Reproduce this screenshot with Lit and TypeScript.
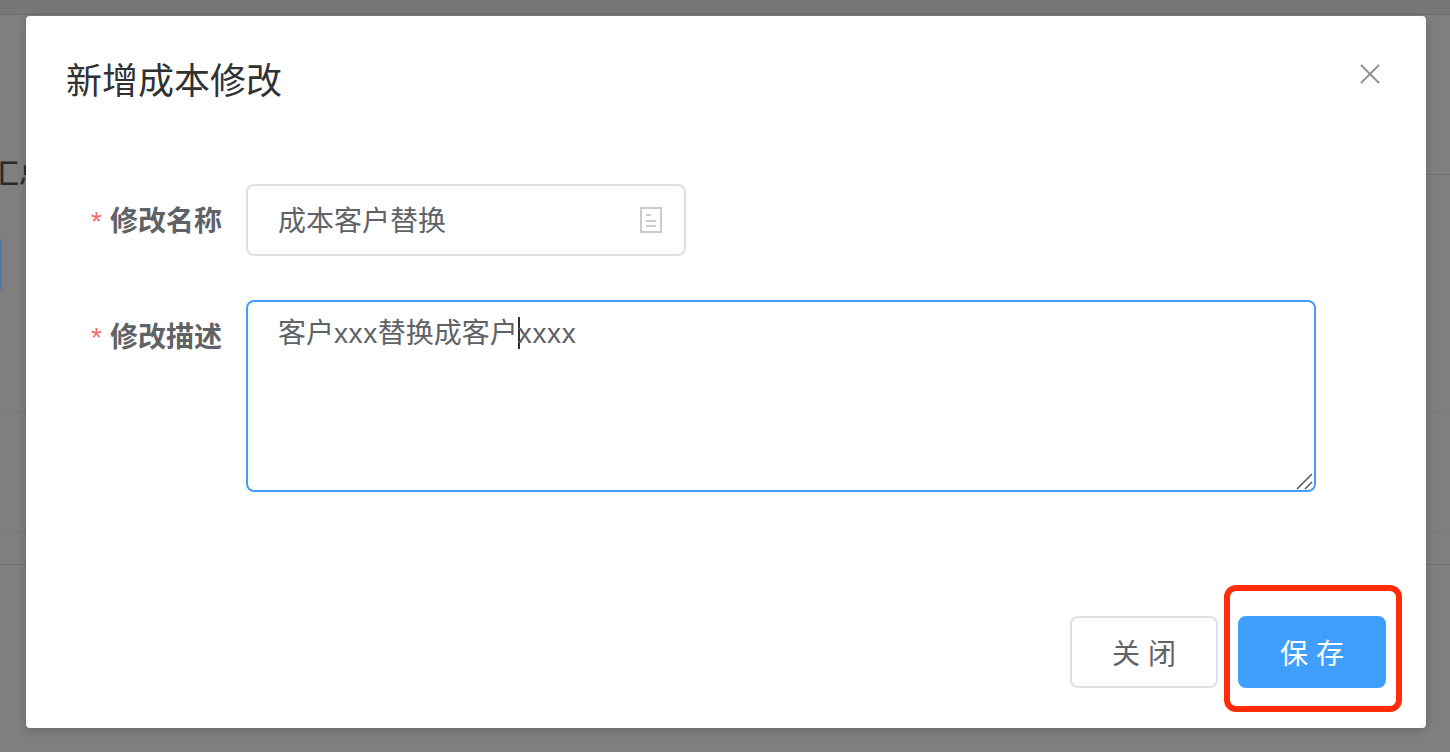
import { LitElement, html, css } from "lit";
import { customElement } from "lit/decorators.js";

@customElement("app-root")
export class AppRoot extends LitElement {
  static styles = css`
    :host {
      display: block;
      width: 1450px;
      height: 752px;
      overflow: hidden;
      font-family: "Liberation Sans", "Noto Sans CJK SC", sans-serif;
    }
    .page {
      position: relative;
      height: 752px;
      background: #7f7f7f;
      overflow: hidden;
    }
    .top-band {
      height: 14px;
      background: #77777a;
      border-bottom: 1px solid #717174;
    }
    .rule {
      position: absolute;
      left: 0;
      right: 0;
      height: 1px;
      background: #77777b;
    }
    .rule.dark {
      background: #717174;
    }
    .rule.right {
      left: 1426px;
    }
    .bg-title {
      position: absolute;
      left: -9px;
      top: 157px;
      font-size: 28px;
      font-weight: 500;
      line-height: 36px;
      color: #2a2a2a;
      white-space: nowrap;
    }
    .bg-btn {
      position: absolute;
      left: -10px;
      top: 238px;
      width: 12px;
      height: 53px;
      border-radius: 4px;
      background: #54789e;
    }
    .dialog {
      position: absolute;
      left: 26px;
      top: 16px;
      width: 1400px;
      height: 712px;
      box-sizing: border-box;
      background: #fff;
      border-radius: 4px;
      box-shadow: 0 2px 10px rgba(0, 0, 0, 0.2);
      padding: 42px 40px 40px;
      display: flex;
      flex-direction: column;
    }
    .head {
      display: flex;
      justify-content: space-between;
      align-items: flex-start;
      height: 48px;
    }
    .title {
      font-size: 36px;
      line-height: 48px;
      color: #303133;
    }
    .close {
      display: block;
      margin: 4px 4px 0 0;
    }
    .form {
      margin-top: 78px;
      display: flex;
      flex-direction: column;
      gap: 42px;
      flex: 1;
    }
    .row {
      display: flex;
      align-items: flex-start;
    }
    .label {
      width: 156px;
      flex: none;
      text-align: right;
      padding-right: 24px;
      padding-top: 2px;
      font-size: 28px;
      line-height: 72px;
      font-weight: 700;
      color: #606266;
      white-space: nowrap;
    }
    .star {
      color: #f56c6c;
      margin-right: 8px;
      font-weight: 400;
    }
    .input {
      width: 440px;
      height: 72px;
      box-sizing: border-box;
      border: 2px solid #dcdfe6;
      border-radius: 8px;
      display: flex;
      align-items: center;
      justify-content: space-between;
      padding: 0 22px 2px 30px;
      font-size: 28px;
      color: #606266;
    }
    .input svg {
      margin-top: 2px;
    }
    .textarea {
      width: 1070px;
      height: 192px;
      box-sizing: border-box;
      border: 2px solid #409eff;
      border-radius: 8px;
      padding: 12px 30px;
      font-size: 28px;
      line-height: 40px;
      color: #606266;
      position: relative;
    }
    .latin {
      letter-spacing: 0.6px;
    }
    .caret {
      display: inline-block;
      width: 2px;
      height: 32px;
      margin-right: -2px;
      background: #303133;
      vertical-align: -6px;
    }
    .grip {
      position: absolute;
      right: 0;
      bottom: 0;
    }
    .foot {
      display: flex;
      justify-content: flex-end;
      gap: 20px;
    }
    .btn {
      width: 148px;
      height: 72px;
      box-sizing: border-box;
      border-radius: 8px;
      font-size: 28px;
      display: flex;
      align-items: center;
      justify-content: center;
      letter-spacing: 8px;
      text-indent: 8px;
      border: 2px solid #dcdfe6;
      background: #fff;
      color: #606266;
    }
    .btn.primary {
      background: #409eff;
      border-color: #409eff;
      color: #fff;
    }
    .mark {
      position: absolute;
      left: 1224px;
      top: 585px;
      width: 178px;
      height: 127px;
      box-sizing: border-box;
      border: 6px solid #ff2d0a;
      border-radius: 12px;
    }
  `;

  render() {
    return html`
      <div class="page">
        <div class="top-band"></div>
        <div class="rule right dark" style="top:174px"></div>
        <div class="rule" style="top:412px"></div>
        <div class="rule" style="top:532px"></div>
        <div class="rule dark" style="top:564px"></div>
        <div class="bg-title">汇总</div>
        <div class="bg-btn"></div>

        <div class="dialog">
          <div class="head">
            <div class="title">新增成本修改</div>
            <svg class="close" width="24" height="24" viewBox="0 0 24 24">
              <path d="M3 3L21 21M21 3L3 21" stroke="#909399" stroke-width="2" fill="none"/>
            </svg>
          </div>
          <div class="form">
            <div class="row">
              <div class="label"><span class="star">*</span>修改名称</div>
              <div class="input">
                <span>成本客户替换</span>
                <svg width="22" height="26" viewBox="0 0 22 26">
                  <path d="M1 1H21V25H1Z" stroke="#c8cbd2" stroke-width="2" fill="none"/>
                  <path d="M6 8H11M6 14H16M6 19H16" stroke="#c8cbd2" stroke-width="2" fill="none"/>
                </svg>
              </div>
            </div>
            <div class="row">
              <div class="label"><span class="star">*</span>修改描述</div>
              <div class="textarea">
                客户<span class="latin">xxx</span>替换成客户<span class="caret"></span><span class="latin">xxxx</span>
                <svg class="grip" width="18" height="18" viewBox="0 0 18 18">
                  <path d="M1 17L16 2M9 17L16 10" stroke="#555" stroke-width="1.500" fill="none"/>
                </svg>
              </div>
            </div>
          </div>
          <div class="foot">
            <div class="btn">关闭</div>
            <div class="btn primary">保存</div>
          </div>
        </div>
        <div class="mark"></div>
      </div>
    `;
  }
}
